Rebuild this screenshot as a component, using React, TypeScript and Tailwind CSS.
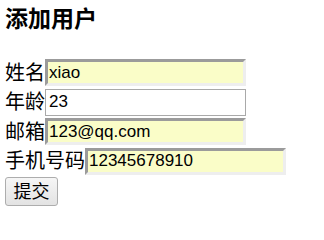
import React from 'react';

const filled =
  'h-[27px] w-[201px] bg-[#fafdc8] border-t-[3px] border-l-[3px] border-b-[3px] border-r-[3px] border-t-[#9b9b9b] border-l-[#9b9b9b] border-b-[#eeeeee] border-r-[#eeeeee] px-[1px] text-[17px] text-black outline-none';
const plain =
  'h-[27px] w-[201px] bg-white border border-[#a9a9a9] px-[3px] text-[17px] text-black outline-none';

function Row({ label, value, auto }: { label: string; value: string; auto: boolean }) {
  return (
    <div className="flex h-[29.5px] items-center">
      <span className="text-[20px] leading-none">{label}</span>
      <input
        defaultValue={value}
        className={auto ? filled : plain}
        style={{ fontFamily: "'Liberation Sans', Arial, sans-serif" }}
      />
    </div>
  );
}

export default function App() {
  return (
    <div className="min-h-[211px] w-[324px] bg-white px-[5px] font-['Liberation_Sans','Noto_Sans_CJK_SC',sans-serif] text-black">
      <div className="h-[58px] pt-[5px]">
        <h3 className="text-[23px] font-bold leading-[28px]">添加用户</h3>
      </div>
      <Row label="姓名" value="xiao" auto />
      <Row label="年龄" value="23" auto={false} />
      <Row label="邮箱" value="123@qq.com" auto />
      <Row label="手机号码" value="12345678910" auto />
      <button
        type="button"
        className="mt-[1px] h-[29px] w-[53px] rounded-[3px] border border-[#adadad] bg-gradient-to-b from-[#f6f6f6] to-[#e3e3e3] text-[18px] leading-none"
      >
        提交
      </button>
    </div>
  );
}
